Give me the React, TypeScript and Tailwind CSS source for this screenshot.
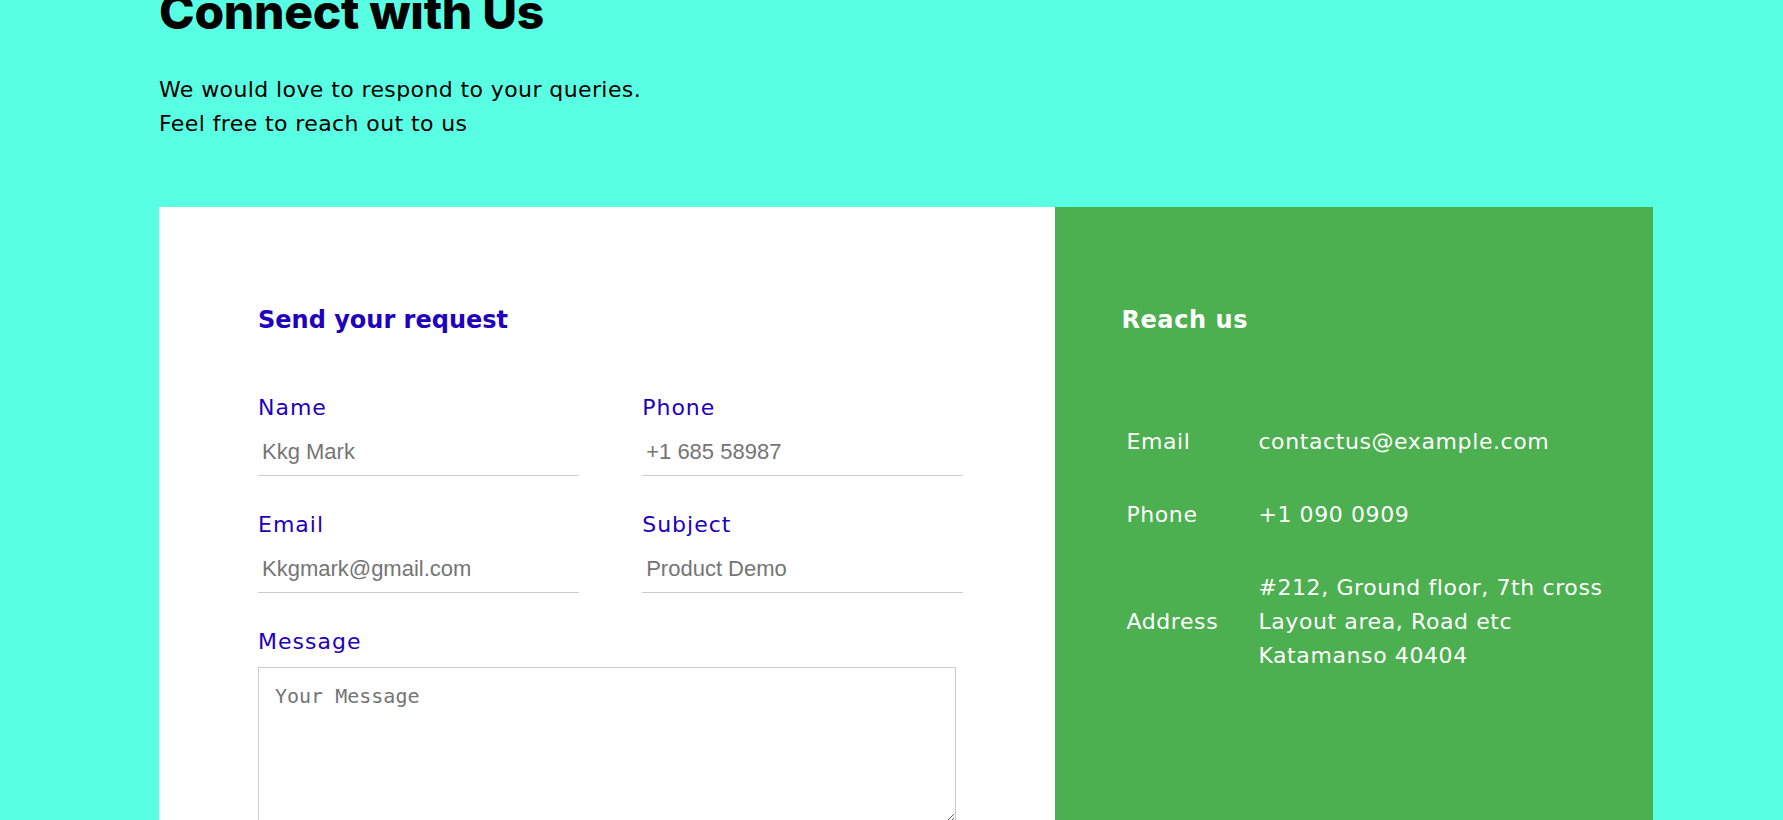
import { useState } from "react";

const contactRows = [
  { label: "Email", value: ["contactus@example.com"] },
  { label: "Phone", value: ["+1 090 0909"] },
  {
    label: "Address",
    value: ["#212, Ground floor, 7th cross", "Layout area, Road etc", "Katamanso 40404"],
  },
];

function Field({
  label,
  placeholder,
  type = "text",
}: {
  label: string;
  placeholder: string;
  type?: string;
}) {
  const [value, setValue] = useState("");
  return (
    <label className="flex flex-col">
      <span className="text-[22px] leading-[30px] tracking-[1px] text-[#1f00bd]">{label}</span>
      <input
        type={type}
        value={value}
        onChange={(e) => setValue(e.target.value)}
        placeholder={placeholder}
        className="mt-[5px] h-[48px] border-b border-[#cccccc] px-[4px] text-[22px] text-[#333] outline-none placeholder:text-[#757575]"
        style={{ fontFamily: '"Liberation Sans", Arial, sans-serif' }}
      />
    </label>
  );
}

export default function App() {
  return (
    <div
      className="min-h-screen overflow-hidden bg-[#58ffe3] text-black"
      style={{ fontFamily: '"DejaVu Sans", "Noto Sans", sans-serif' }}
    >
      <div className="ml-[159px] w-[1494px]">
        <h1
          className="-mt-[12px] text-[48px] font-extrabold leading-[1] tracking-[-0.3px]"
          style={{ fontFamily: "Inter, sans-serif" }}
        >
          Connect with Us
        </h1>

        <p className="mt-[37px] text-[22px] leading-[34px] tracking-[0.4px]">
          We would love to respond to your queries.
          <br />
          Feel free to reach out to us
        </p>

        {/* Form + contact card */}
        <div className="mt-[66px] flex">
          <div className="w-3/5 bg-white pt-[95px] pl-[99px] pr-[92px] pb-10">
            <h2 className="text-[24px] font-semibold leading-[36px] text-[#1f00bd]">
              Send your request
            </h2>

            <div className="mt-[55px] grid grid-cols-2 gap-x-[63px] gap-y-[34px]">
              <Field label="Name" placeholder="Kkg Mark" />
              <Field label="Phone" placeholder="+1 685 58987" type="tel" />
              <Field label="Email" placeholder="Kkgmark@gmail.com" type="email" />
              <Field label="Subject" placeholder="Product Demo" />
            </div>

            <div className="mt-[34px] flex flex-col">
              <span className="text-[22px] leading-[30px] tracking-[1px] text-[#1f00bd]">
                Message
              </span>
              <textarea
                placeholder="Your Message"
                className="mt-[10px] h-[156px] w-[698px] border border-[#cccccc] p-4 text-[20px] leading-[24px] outline-none placeholder:text-[#757575]"
                style={{ fontFamily: '"DejaVu Sans Mono", monospace' }}
              />
            </div>
          </div>

          <div className="w-2/5 bg-[#4caf50] pt-[95px] pl-[66px] pr-10 text-white">
            <h2 className="text-[24px] font-bold leading-[36px] tracking-[0.6px]">Reach us</h2>

            <div className="mt-[67px] grid grid-cols-[132px_1fr] items-center text-[22px] leading-[34px] tracking-[0.6px]">
              {contactRows.map((row) => (
                <div key={row.label} className="contents">
                  <div className="py-[19.5px] pl-[5px]">{row.label}</div>
                  <div className="py-[19.5px] pl-[5px]">
                    {row.value.map((line) => (
                      <div key={line}>{line}</div>
                    ))}
                  </div>
                </div>
              ))}
            </div>
          </div>
        </div>
      </div>
    </div>
  );
}
